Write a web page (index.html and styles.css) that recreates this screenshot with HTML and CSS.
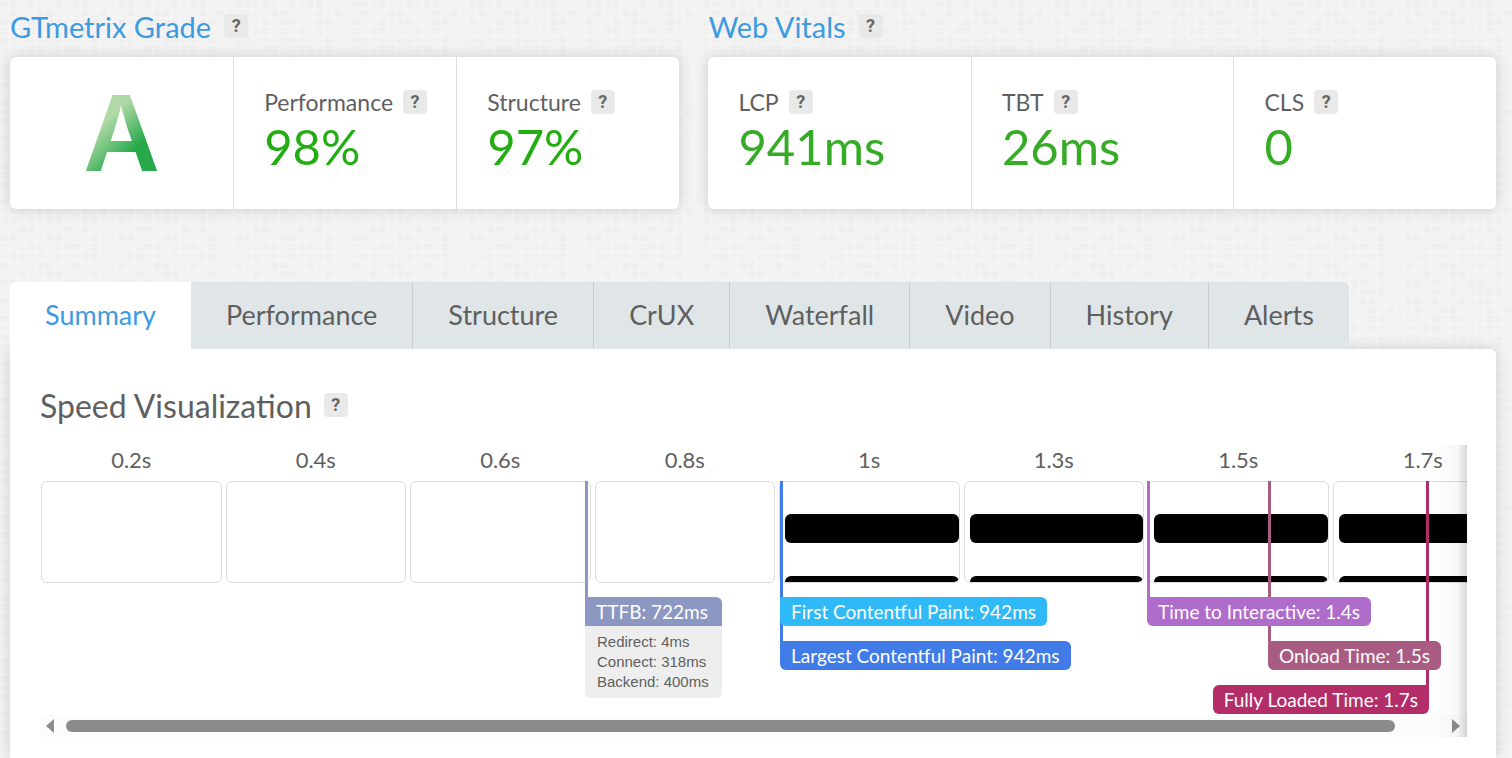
FILE: index.html
```
<!DOCTYPE html>
<html lang="en">
<head>
    <meta charset="utf-8">
    <title>Performance Report</title>
    <link rel="stylesheet" href="styles.css">
</head>
<body>
    <!-- Scores -->
    <div class="report-scores">
        <section>
            <h2 class="score-title">GTmetrix Grade <button class="help" aria-label="Help">?</button></h2>
            <div class="card">
                <div class="card-cell grade"><span class="grade-letter">A</span></div>
                <div class="card-cell">
                    <h3>Performance <button class="help" aria-label="Help">?</button></h3>
                    <div class="score-value">98%</div>
                </div>
                <div class="card-cell">
                    <h3>Structure <button class="help" aria-label="Help">?</button></h3>
                    <div class="score-value">97%</div>
                </div>
            </div>
        </section>
        <section>
            <h2 class="score-title">Web Vitals <button class="help" aria-label="Help">?</button></h2>
            <div class="card vitals">
                <div class="card-cell">
                    <h3>LCP <button class="help" aria-label="Help">?</button></h3>
                    <div class="score-value">941ms</div>
                </div>
                <div class="card-cell">
                    <h3>TBT <button class="help" aria-label="Help">?</button></h3>
                    <div class="score-value">26ms</div>
                </div>
                <div class="card-cell">
                    <h3>CLS <button class="help" aria-label="Help">?</button></h3>
                    <div class="score-value">0</div>
                </div>
            </div>
        </section>
    </div>

    <!-- Tabs -->
    <nav class="tabs">
        <a href="#summary" class="active">Summary</a>
        <a href="#performance">Performance</a>
        <a href="#structure">Structure</a>
        <a href="#crux">CrUX</a>
        <a href="#waterfall">Waterfall</a>
        <a href="#video">Video</a>
        <a href="#history">History</a>
        <a href="#alerts">Alerts</a>
    </nav>

    <main class="panel" id="summary">
        <h2 class="panel-title">Speed Visualization <button class="help" aria-label="Help">?</button></h2>

        <div class="timeline">
            <ol class="frames">
                <li><span class="frame-time">0.2s</span><div class="frame"></div></li>
                <li><span class="frame-time">0.4s</span><div class="frame"></div></li>
                <li><span class="frame-time">0.6s</span><div class="frame"></div></li>
                <li><span class="frame-time">0.8s</span><div class="frame"></div></li>
                <li><span class="frame-time">1s</span><div class="frame loaded"></div></li>
                <li><span class="frame-time">1.3s</span><div class="frame loaded"></div></li>
                <li><span class="frame-time">1.5s</span><div class="frame loaded"></div></li>
                <li><span class="frame-time">1.7s</span><div class="frame loaded"></div></li>
            </ol>

            <!-- Event markers, later events first so that earlier labels lie over their lines -->
            <div class="marker fully-loaded row-3 flip" style="right: 2.66%">
                <span class="marker-label">Fully Loaded Time: 1.7s</span>
            </div>
            <div class="marker onload row-2" style="left: 86.05%">
                <span class="marker-label">Onload Time: 1.5s</span>
            </div>
            <div class="marker tti" style="left: 77.58%">
                <span class="marker-label">Time to Interactive: 1.4s</span>
            </div>
            <div class="marker lcp row-2" style="left: 51.86%">
                <span class="marker-label">Largest Contentful Paint: 942ms</span>
            </div>
            <div class="marker fcp" style="left: 51.86%">
                <span class="marker-label">First Contentful Paint: 942ms</span>
            </div>
            <div class="marker ttfb" style="left: 38.19%">
                <span class="marker-label">TTFB: 722ms</span>
                <ul class="marker-details">
                    <li>Redirect: 4ms</li>
                    <li>Connect: 318ms</li>
                    <li>Backend: 400ms</li>
                </ul>
            </div>

            <div class="scrollbar">
                <button class="scroll-btn" aria-label="Scroll left">
                    <svg width="8" height="14" viewBox="0 0 8 14"><path d="M8 0v14L0 7z"/></svg>
                </button>
                <div class="scroll-track"><div class="scroll-thumb" style="width: 96.5%"></div></div>
                <button class="scroll-btn" aria-label="Scroll right">
                    <svg width="8" height="14" viewBox="0 0 8 14"><path d="M0 0v14l8-7z"/></svg>
                </button>
            </div>
        </div>
    </main>
</body>
</html>
```
FILE: styles.css
```
* {
    box-sizing: border-box;
}

body {
    margin: 0;
    padding: 0 16px 0 10px;
    min-height: 100vh;
    display: flex;
    flex-direction: column;
    font-family: Lato, "Open Sans", sans-serif;
    color: #5f5f5f;
    background-color: #f2f2f2;
    /* grid lines over a scatter of darker squares */
    background-image:
        linear-gradient(to right, #f4f4f4 2px, transparent 2px),
        linear-gradient(#f4f4f4 2px, transparent 2px),
        url("data:image/svg+xml,%3Csvg xmlns='http://www.w3.org/2000/svg' width='117' height='99'%3E%3Cpath stroke='%23efefef' stroke-width='7' d='M1 4h7m2 0h7m10 0h7m20 0h7m11 0h7m2 0h7M10 13h7m20 0h7m2 0h7m29 0h7m11 0h7M1 22h7m20 0h7m11 0h7m2 0h7m20 0h7m2 0h7M19 31h7m2 0h7m29 0h7m11 0h7M1 40h7m2 0h7m29 0h7m2 0h7m29 0h7M28 49h7m2 0h7m20 0h7m2 0h7m11 0h7M10 58h7m2 0h7m29 0h7m20 0h7m2 0h7M1 67h7m29 0h7m2 0h7m20 0h7M19 76h7m20 0h7m2 0h7m11 0h7m11 0h7M1 85h7m2 0h7m11 0h7m29 0h7m2 0h7M28 94h7m11 0h7m20 0h7m2 0h7m2 0h7'/%3E%3Cpath stroke='%23f1f1f1' stroke-width='7' d='M19 4h7m11 0h7m20 0h7M1 13h7m11 0h7m38 0h7M10 22h7m20 0h7m29 0h7M1 31h7m38 0h7m20 0h7M28 40h7m38 0h7M1 49h7m11 0h7m29 0h7M37 58h7m29 0h7M19 67h7m38 0h7m20 0h7M1 76h7m29 0h7m29 0h7M46 85h7m38 0h7M10 94h7m47 0h7'/%3E%3C/svg%3E");
    background-size: 9px 9px, 9px 9px, auto;
    background-position: 8px 0, 0 8px, 0 0;
}

h2,
h3,
ol,
ul {
    margin: 0;
    padding: 0;
    font-weight: 400;
    list-style: none;
}

/* Scores */
.report-scores {
    display: grid;
    grid-template-columns: 17fr 20fr;
    gap: 29px;
    margin-bottom: 73px;
}

.score-title,
.panel-title,
.card h3 {
    display: flex;
    align-items: center;
}

.score-title {
    height: 57px;
    gap: 13px;
    padding-bottom: 5px;
    font-size: 29px;
    color: #3c9be0;
}

.help {
    width: 24px;
    height: 24px;
    padding: 0;
    border: none;
    border-radius: 4px;
    background: #e9e9e9;
    color: #666;
    font: 700 18px/24px Roboto, sans-serif;
    cursor: pointer;
}

.card {
    display: grid;
    grid-auto-flow: column;
    grid-auto-columns: 1fr;
    height: 152px;
    background: #fff;
    border-radius: 6px;
    box-shadow: 0 0 14px rgba(0, 0, 0, 0.15);
}

.card-cell {
    padding: 30px 0 0 30px;
}

.card-cell + .card-cell {
    border-left: 1px solid #ddd;
}

.card h3 {
    height: 30px;
    gap: 10px;
    font-size: 23px;
}

.score-value {
    font-size: 49px;
    line-height: 58px;
    color: #22ae12;
}

.vitals .score-value {
    color: #36ab26;
}

.grade {
    display: flex;
    align-items: center;
    justify-content: center;
    padding: 0;
}

.grade-letter {
    font-family: Inter, sans-serif;
    font-size: 105px;
    font-weight: 600;
    line-height: 152px;
    color: transparent;
    background: linear-gradient(135deg, #b1d9a7 38%, #27a84a 63%);
    background-clip: text;
    -webkit-background-clip: text;
}

/* Tabs */
.tabs {
    display: flex;
}

/* stacked above the panel's shadow */
.tabs a {
    position: relative;
    z-index: 1;
    height: 67px;
    padding: 0 35px;
    background: #e0e6e8;
    color: #5f5f5f;
    font-size: 27px;
    line-height: 65px;
    text-decoration: none;
}

.tabs a + a {
    border-left: 1px solid #c9cdcf;
}

.tabs .active {
    background: #fff;
    color: #3c9be0;
    border-top-left-radius: 6px;
}

.tabs .active + a {
    border-left: none;
}

.tabs a:last-child {
    border-top-right-radius: 6px;
}

/* Summary panel */
.panel {
    flex: 1;
    padding: 36px 29px 20px 30px;
    background: #fff;
    border-top-right-radius: 6px;
    box-shadow: 0 0 14px rgba(0, 0, 0, 0.15);
}

.panel-title {
    height: 40px;
    gap: 12px;
    margin-bottom: 20px;
    font-size: 32px;
}

.timeline {
    position: relative;
    overflow: hidden;
}

/* fade on the side that still scrolls */
.timeline::after {
    content: "";
    position: absolute;
    top: 0;
    right: 0;
    bottom: 0;
    width: 32px;
    background: linear-gradient(to right, transparent, rgba(0, 0, 0, 0.03) 70%, rgba(0, 0, 0, 0.16));
    pointer-events: none;
}

.frames {
    display: flex;
    height: 270px;
}

.frames li {
    flex: 0 0 12.93%;
    padding: 0 3px 0 1px;
}

.frame-time {
    display: block;
    height: 36px;
    font-size: 22px;
    line-height: 29px;
    text-align: center;
}

.frame {
    height: 102px;
    border: 1px solid #ddd;
    border-radius: 6px;
    overflow: hidden;
}

.loaded {
    padding: 32px 0 0 5px;
}

.loaded::before,
.loaded::after {
    content: "";
    display: block;
    height: 29px;
    background: #000;
    border-radius: 6px;
}

.loaded::after {
    height: 6px;
    margin-top: 33px;
    border-radius: 6px 6px 0 0;
}

/* Markers */
.marker {
    position: absolute;
    top: 36px;
    padding-top: 116px;
}

.marker::before {
    content: "";
    position: absolute;
    top: 0;
    left: 0;
    width: 3px;
    height: 120px;
    background: var(--marker-color);
}

.row-2 {
    padding-top: 160px;
}

.row-2::before {
    height: 164px;
}

.row-3 {
    padding-top: 204px;
}

.row-3::before {
    height: 208px;
}

.flip::before {
    left: auto;
    right: 0;
}

.marker-label {
    display: block;
    height: 29px;
    padding: 0 11px;
    border-radius: 0 6px 6px 6px;
    background: var(--marker-color);
    color: #fff;
    font-size: 19px;
    line-height: 29px;
    white-space: nowrap;
}

.flip .marker-label {
    border-radius: 6px 0 6px 6px;
}

.ttfb {
    --marker-color: #8c98c1;
}

.ttfb .marker-label {
    border-radius: 0 6px 0 0;
}

.fcp {
    --marker-color: #2fbaf7;
}

/* shares its line with LCP */
.fcp::before {
    display: none;
}

.lcp {
    --marker-color: #417be8;
}

.tti {
    --marker-color: #b06cca;
}

.onload {
    --marker-color: #a85c82;
}

.fully-loaded {
    --marker-color: #b32e68;
}

.marker-details {
    padding: 6px 13px 6px 12px;
    background: #eee;
    border-radius: 0 0 6px 6px;
    font: 15px/20px "Liberation Sans", Arial, sans-serif;
}

/* Scrollbar */
.scrollbar {
    display: flex;
    align-items: center;
    height: 22px;
    background: #fcfcfc;
}

.scroll-btn {
    display: flex;
    width: 26px;
    padding: 0 0 0 6px;
    border: none;
    background: none;
    fill: #8b8b8b;
}

.scroll-btn:last-child {
    width: 24px;
    padding-left: 9px;
}

.scroll-track {
    flex: 1;
}

.scroll-thumb {
    height: 12px;
    border-radius: 6px;
    background: #8b8b8b;
}
```
